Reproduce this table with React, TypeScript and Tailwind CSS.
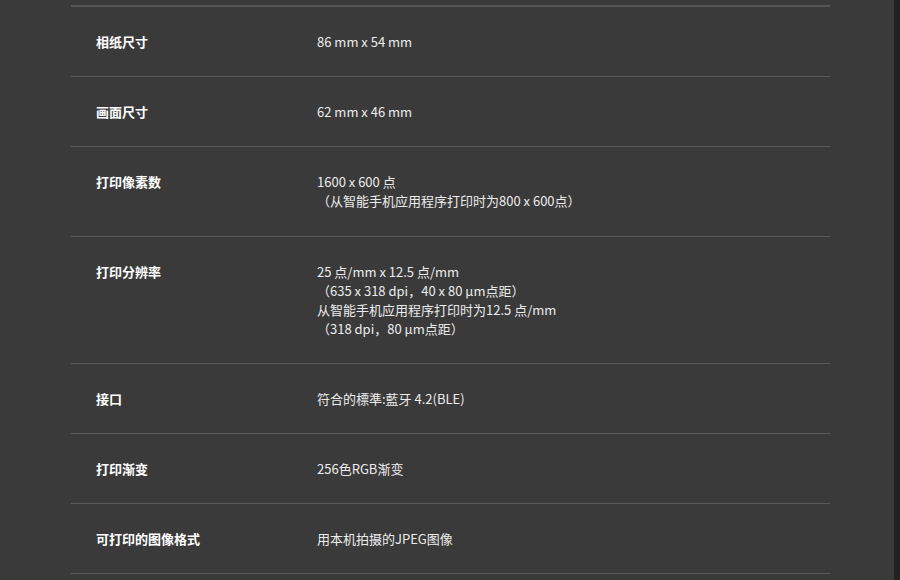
const specs: { label: string; value: string[]; tall?: boolean }[] = [
  { label: '相纸尺寸', value: ['86 mm x 54 mm'] },
  { label: '画面尺寸', value: ['62 mm x 46 mm'] },
  { label: '打印像素数', value: ['1600 x 600 点', '（从智能手机应用程序打印时为800 x 600点）'], tall: true },
  {
    label: '打印分辨率',
    value: [
      '25 点/mm x 12.5 点/mm',
      '（635 x 318 dpi，40 x 80 μm点距）',
      '从智能手机应用程序打印时为12.5 点/mm',
      '（318 dpi，80 μm点距）',
    ],
  },
  { label: '接口', value: ['符合的標準:藍牙 4.2(BLE)'] },
  { label: '打印渐变', value: ['256色RGB渐变'] },
  { label: '可打印的图像格式', value: ['用本机拍摄的JPEG图像'] },
]

export default function App() {
  return (
    <div className="flex h-[580px] w-[900px] overflow-hidden bg-[#222222] font-['Noto_Sans_CJK_SC','Noto_Sans',sans-serif]">
      <div className="h-full w-[894px] bg-[#3a3a3a] pl-[71px] pr-[64px] pt-[5px]">
        <div className="border-t-2 border-[#555555]">
          {specs.map((row) => (
            <div
              key={row.label}
              className={
                row.tall
                  ? 'flex border-b border-[#5a5a5a] pt-[25px] pb-[26px] text-[13px] leading-[19px]'
                  : 'flex border-b border-[#5a5a5a] py-[25px] text-[13px] leading-[19px]'
              }
            >
              <div className="w-[246px] shrink-0 pl-[25px] font-bold text-white">{row.label}</div>
              <div className="text-[#ececec]">
                {row.value.map((line) => (
                  <div key={line}>{line}</div>
                ))}
              </div>
            </div>
          ))}
        </div>
      </div>
    </div>
  )
}
